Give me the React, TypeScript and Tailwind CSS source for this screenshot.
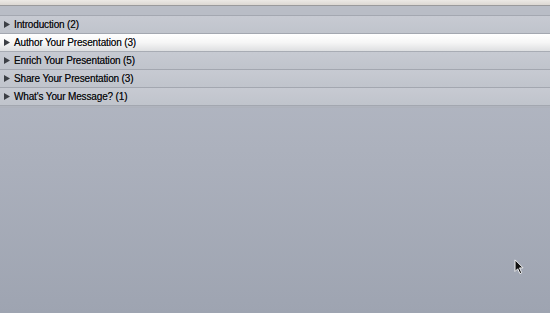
import React from "react";

const sections = [
  { title: "Introduction", count: 2 },
  { title: "Author Your Presentation", count: 3, active: true },
  { title: "Enrich Your Presentation", count: 5 },
  { title: "Share Your Presentation", count: 3 },
  { title: "What's Your Message?", count: 1 },
];

function Arrow() {
  return (
    <svg viewBox="0 0 6 7" className="h-[7px] w-[6px] shrink-0" aria-hidden>
      <path d="M0 0L6 3.5L0 7Z" fill="#3c3f45" />
    </svg>
  );
}

export default function App() {
  return (
    <div className="relative flex h-[313px] w-[550px] flex-col overflow-hidden bg-gradient-to-b from-[#b9bdc8] to-[#9ea4b1] font-['Liberation_Sans',sans-serif]">
      <div className="h-[6px] bg-gradient-to-b from-[#ece9e5] to-[#dcd8d3] border-b border-[#9a9a9c]" />
      <div className="h-[10px] bg-[#b9bdc6] border-b border-[#a4a8b1]" />

      <div className="flex flex-col">
        {sections.map((s) => (
          <div
            key={s.title}
            className={
              s.active
                ? "flex h-[18px] items-center gap-[4px] border-b border-[#a8acb4] bg-gradient-to-b from-[#ffffff] via-[#f6f6f6] to-[#dedfe1] pl-[4px]"
                : "flex h-[18px] items-center gap-[4px] border-b border-[#a3a7b0] bg-gradient-to-b from-[#c7cad2] to-[#c0c4cc] pl-[4px]"
            }
          >
            <Arrow />
            <span className="text-[10px] leading-none tracking-[-0.15px] text-[#0c0d10] [text-shadow:0_0_0.4px_rgba(0,0,0,0.6)]">
              {s.title} ({s.count})
            </span>
          </div>
        ))}
      </div>
      <div className="h-[2px] bg-[#b0b4be] border-b border-[#aeb2bc]" />

      <svg
        viewBox="0 0 12 18"
        className="absolute left-[514px] top-[259px] h-[16px] w-[11px]"
        aria-hidden
      >
        <path
          d="M1 1L1 14L4 11L6.5 16.5L8.5 15.5L6 10L10 10Z"
          fill="#111"
          stroke="#fff"
          strokeWidth="1"
          strokeLinejoin="round"
        />
      </svg>
    </div>
  );
}
